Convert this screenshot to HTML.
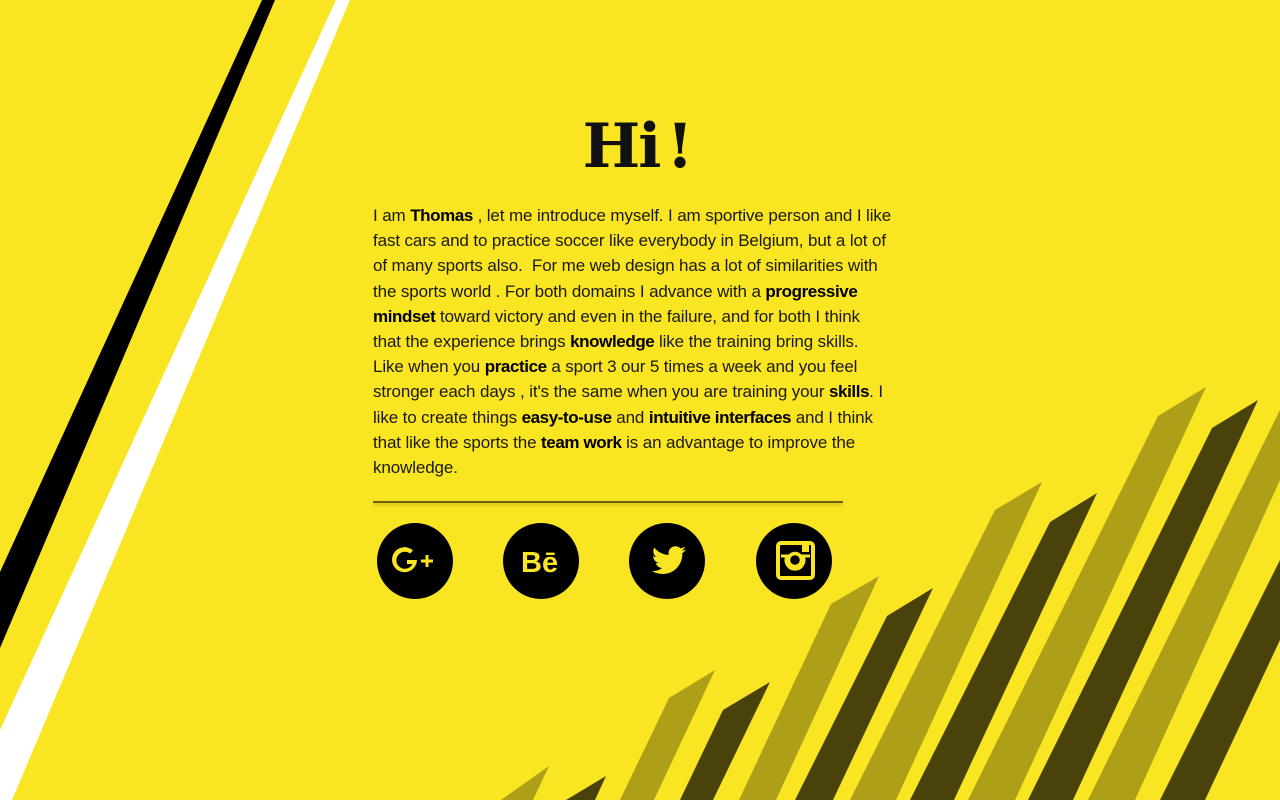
<!DOCTYPE html>
<html><head><meta charset="utf-8"><style>
html,body{margin:0;padding:0;}
body{width:1280px;height:800px;overflow:hidden;background:#fae522;position:relative;font-family:"Liberation Sans",sans-serif;}
svg.bg{position:absolute;left:0;top:0;}
h1{position:absolute;left:0;width:1274px;top:112px;margin:0;text-align:center;font-family:"DejaVu Serif",serif;font-weight:bold;font-size:61px;line-height:70px;letter-spacing:-2px;word-spacing:-12px;color:#111;}
.txt{position:absolute;left:373px;top:203px;font-size:17px;line-height:25.2px;color:#1a1a0a;letter-spacing:-0.12px;white-space:nowrap;}
.txt b{color:#000;letter-spacing:-0.4px;}
.hr{position:absolute;left:373px;top:501px;width:470px;height:2px;background:#6b6010;box-shadow:0 2px 3px rgba(100,90,0,0.35);}
.c{position:absolute;top:523px;width:76px;height:76px;border-radius:50%;background:#000;}
.c svg{position:absolute;left:0;top:0;}
</style></head><body>
<svg class="bg" width="1280" height="800" viewBox="0 0 1280 800">
<polygon points="262,0 275,0 0,648 0,572" fill="#000"/>
<polygon points="336,0 350,0 12,800 0,800 0,730" fill="#fff"/>
<g fill="#ada018">
<polygon points="501,800 549,766 533,800"/>
<polygon points="669,698 715,670 654,800 620,800"/>
<polygon points="831,604 879,576 776,800 739,800"/>
<polygon points="995,510 1042,482 896,800 850,800"/>
<polygon points="1158,416 1206,387 1015,800 968,800"/>
<polygon points="1280,410 1280,480 1135,800 1088,800"/>
</g>
<g fill="#4a420b">
<polygon points="566,800 606,776 595,800"/>
<polygon points="723,710 770,682 713,800 680,800"/>
<polygon points="887,616 933,588 833,800 795,800"/>
<polygon points="1050,522 1097,493 954,800 910,800"/>
<polygon points="1212,428 1258,400 1073,800 1028,800"/>
<polygon points="1280,560 1280,640 1205,800 1160,800"/>
</g>
</svg>
<h1>Hi !</h1>
<div class="txt">I am <b>Thomas</b> , let me introduce myself. I am sportive person and I like<br>fast cars and to practice soccer like everybody in Belgium, but a lot of<br>of many sports also.&nbsp; For me web design has a lot of similarities with<br>the sports world . For both domains I advance with a <b>progressive</b><br><b>mindset</b> toward victory and even in the failure, and for both I think<br>that the experience brings <b>knowledge</b> like the training bring skills.<br>Like when you <b>practice</b> a sport 3 our 5 times a week and you feel<br>stronger each days , it's the same when you are training your <b>skills</b>. I<br>like to create things <b>easy-to-use</b> and <b>intuitive interfaces</b> and I think<br>that like the sports the <b>team work</b> is an advantage to improve the<br>knowledge.</div>
<div class="hr"></div>
<div class="c" style="left:377px"><svg width="76" height="76" viewBox="0 0 76 76"><path d="M40 37 H30 V41 H35.5 A8.5 8.5 0 1 1 33 30.5 L36 27.5 A12.5 12.5 0 1 0 40 37 Z" fill="#fae522"/><path d="M44 36.5h4.5v-4.5h3v4.5h4.5v3h-4.5v4.5h-3v-4.5h-4.5z" fill="#fae522"/></svg></div>
<div class="c" style="left:503px"><svg width="76" height="76" viewBox="0 0 76 76"><text x="18" y="49" font-family="Liberation Sans" font-weight="bold" font-size="29" fill="#fae522">Bē</text></svg></div>
<div class="c" style="left:629px"><svg width="76" height="76" viewBox="0 0 76 76"><path d="M57 26.5c-1.3.6-2.6 1-4 1.1 1.4-.9 2.5-2.2 3-3.8-1.4.8-2.9 1.4-4.4 1.7-1.3-1.4-3.1-2.2-5.1-2.2-3.9 0-7 3.1-7 7 0 .5.1 1.1.2 1.6-5.8-.3-11-3.1-14.4-7.3-.6 1-1 2.2-1 3.5 0 2.4 1.2 4.6 3.1 5.8-1.2 0-2.2-.4-3.2-.9v.1c0 3.4 2.4 6.2 5.6 6.9-.6.2-1.2.2-1.8.2-.4 0-.9 0-1.3-.1.9 2.8 3.5 4.8 6.5 4.9-2.4 1.9-5.4 3-8.7 3-.6 0-1.1 0-1.7-.1 3.1 2 6.8 3.1 10.7 3.1 12.9 0 19.9-10.7 19.9-19.9v-.9c1.4-1 2.6-2.2 3.6-3.7z" fill="#fae522"/></svg></div>
<div class="c" style="left:756px"><svg width="76" height="76" viewBox="0 0 76 76"><rect x="22" y="20" width="35" height="35" rx="3" fill="none" stroke="#fae522" stroke-width="4"/><path d="M25 33 H31 A9 9 0 1 0 47 33 H54" fill="none" stroke="#fae522" stroke-width="3"/><circle cx="39" cy="37" r="6.5" fill="none" stroke="#fae522" stroke-width="3.5"/><rect x="46" y="22" width="7" height="7" fill="#fae522"/></svg></div>
</body></html>
